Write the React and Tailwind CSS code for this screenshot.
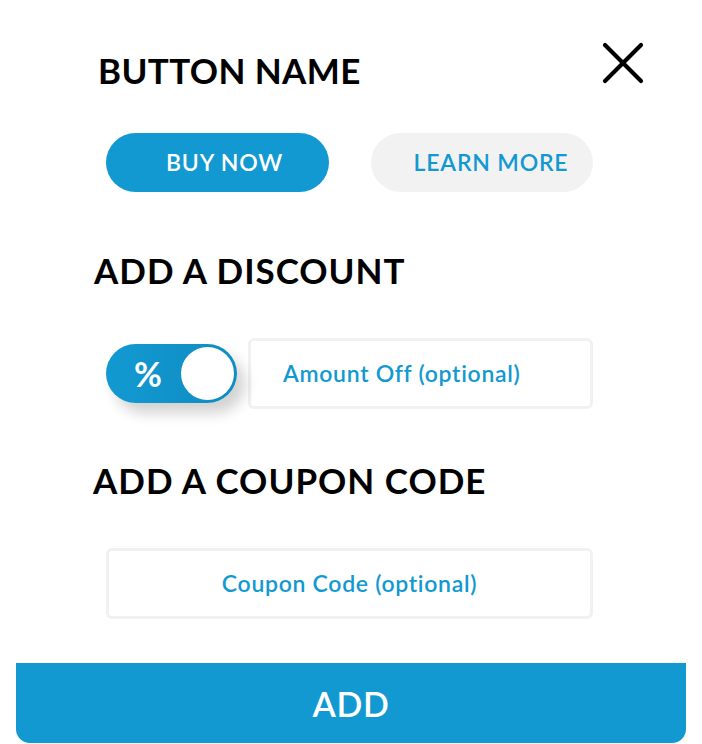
import React, { useState } from "react";

function App() {
  const [percent, setPercent] = useState(true);

  return (
    <div
      className="w-[702px] h-[744px] bg-white relative overflow-hidden flex flex-col"
      style={{ fontFamily: "Lato, 'Noto Sans', sans-serif" }}
    >
      {/* header */}
      <div className="flex items-center justify-between pl-[98px] pr-[57px] pt-[50px]">
        <h1 className="text-[35px] font-bold text-black leading-[40px] tracking-[0.4px]">BUTTON NAME</h1>
        <button aria-label="Close" className="w-[44px] h-[44px] flex items-center justify-center -mt-[14px]">
          <svg width="42" height="42" viewBox="0 0 42 42">
            <path d="M3 3 L39 39 M39 3 L3 39" stroke="#000" strokeWidth="4.2" strokeLinecap="round" />
          </svg>
        </button>
      </div>

      {/* button type */}
      <div className="flex gap-[42px] pl-[106px] mt-[43px]">
        <button className="w-[223px] h-[59px] rounded-full bg-[#1299d1] text-white text-[23px] font-semibold pl-[14px] tracking-[0.8px]">
          BUY NOW
        </button>
        <button className="w-[222px] h-[59px] rounded-full bg-[#f2f2f2] text-[#1299d1] text-[23px] font-semibold pl-[18px] tracking-[0.8px]">
          LEARN MORE
        </button>
      </div>

      {/* discount */}
      <h2 className="pl-[94px] mt-[58px] text-[35px] font-bold text-black leading-[40px] tracking-[1px]">ADD A DISCOUNT</h2>

      <div className="flex items-center pl-[106px] mt-[48px]">
        <button
          onClick={() => setPercent(!percent)}
          className="relative w-[131px] h-[59px] rounded-full bg-gradient-to-r from-[#1299d1] to-[#0f8cc2] flex items-center shadow-[8px_10px_14px_rgba(0,0,0,0.18)]"
        >
          <span className="text-white text-[34px] font-bold pl-[28px] leading-none">%</span>
          <span className="absolute right-[3px] top-[3px] w-[53px] h-[53px] rounded-full bg-white" />
        </button>
        <div className="ml-[11px] w-[345px] h-[71px] rounded-[6px] border-[3px] border-[#f1f1f1] flex items-center pl-[32px]">
          <span className="text-[23px] font-semibold text-[#1299d1] tracking-[0.7px]">Amount Off (optional)</span>
        </div>
      </div>

      {/* coupon */}
      <h2 className="pl-[93px] mt-[51px] text-[35px] font-bold text-black leading-[40px] tracking-[1px]">ADD A COUPON CODE</h2>

      <div className="pl-[106px] mt-[48px]">
        <div className="w-[487px] h-[71px] rounded-[6px] border-[3px] border-[#f1f1f1] flex items-center justify-center">
          <span className="text-[23px] font-semibold text-[#1299d1] tracking-[0.7px]">Coupon Code (optional)</span>
        </div>
      </div>

      {/* add */}
      <div className="px-[16px] mt-[44px]">
        <button className="w-full h-[80px] bg-[#1299d1] rounded-b-[14px] text-white text-[34px] font-semibold tracking-[0.6px]">
          ADD
        </button>
      </div>
    </div>
  );
}

export default App;
